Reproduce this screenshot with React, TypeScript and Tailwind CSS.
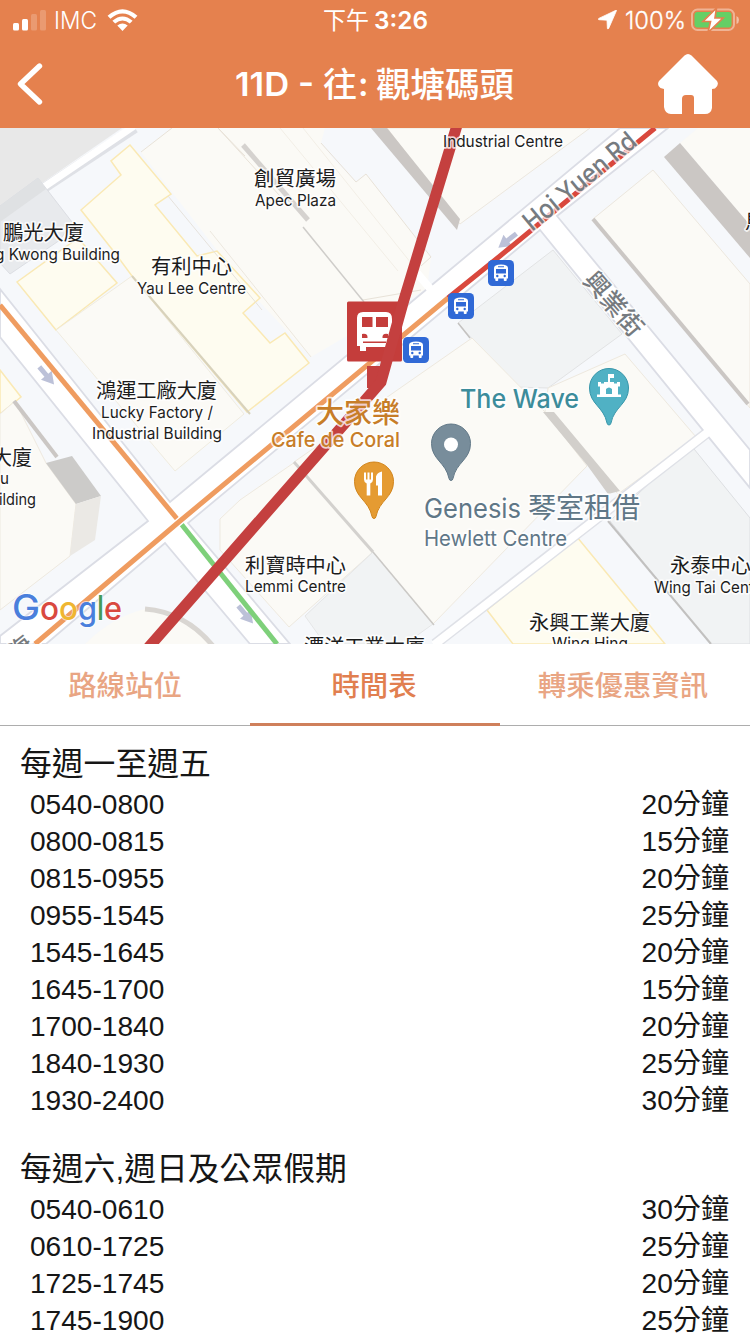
import React from "react";

type Slot = { time: string; gap: string };
type Section = { title: string; slots: Slot[] };

const sections: Section[] = [
  {
    title: "每週一至週五",
    slots: [
      { time: "0540-0800", gap: "20分鐘" },
      { time: "0800-0815", gap: "15分鐘" },
      { time: "0815-0955", gap: "20分鐘" },
      { time: "0955-1545", gap: "25分鐘" },
      { time: "1545-1645", gap: "20分鐘" },
      { time: "1645-1700", gap: "15分鐘" },
      { time: "1700-1840", gap: "20分鐘" },
      { time: "1840-1930", gap: "25分鐘" },
      { time: "1930-2400", gap: "30分鐘" },
    ],
  },
  {
    title: "每週六,週日及公眾假期",
    slots: [
      { time: "0540-0610", gap: "30分鐘" },
      { time: "0610-1725", gap: "25分鐘" },
      { time: "1725-1745", gap: "20分鐘" },
      { time: "1745-1900", gap: "25分鐘" },
    ],
  },
];

function StatusBar() {
  return (
    <div className="grid h-10 grid-cols-3 items-center text-[23px] leading-10">
      <div className="flex items-center pl-[13px]">
        <svg width="33" height="22" viewBox="0 0 33 22" fill="#fff">
          <rect x="0" y="14" width="6" height="7.5" rx="1.5" />
          <rect x="9" y="10" width="6" height="11.5" rx="1.5" />
          <rect x="18" y="5" width="6" height="16.5" rx="1.5" opacity=".2" />
          <rect x="27" y="1" width="6" height="20.5" rx="1.5" opacity=".2" />
        </svg>
        <svg width="46" height="40" className="ml-[7px] block" fill="#fff">
          <text x="1" y="29" fontSize="24" fontWeight="300" textLength="43" lengthAdjust="spacingAndGlyphs">IMC</text>
        </svg>
        <svg className="ml-[8px]" width="31" height="24" viewBox="0 0 31 24" fill="#fff">
          <path d="M.6 7.8Q15.500-5.300 30.400 7.800L27.600 10.700Q15.500.2 3.400 10.700Z" />
          <path d="M5.400 12.700Q15.500 4.100 25.600 12.700L22.800 15.600Q15.500 9.500 8.200 15.600Z" />
          <path d="M10.300 17.600Q15.500 13.500 20.700 17.600L15.500 22.900Z" />
        </svg>
      </div>
      <svg width="250" height="40" fill="#fff">
        <text x="73" y="29" fontSize="23.500" textLength="46" lengthAdjust="spacingAndGlyphs">下午</text>
        <text x="124" y="29" fontSize="24" fontWeight="600" textLength="54" lengthAdjust="spacingAndGlyphs">3:26</text>
      </svg>
      <div className="flex items-center justify-end pr-[11px]">
        <svg width="19" height="20" viewBox="0 0 19 20" fill="#fff">
          <path d="M18.500.6Q18.800 0 17.900.3L.8 8.400Q-.4 9.300.8 9.700L9 10.200 9.400 18.500Q9.800 19.600 10.700 18.400Z" stroke="#fff" strokeWidth=".8" />
        </svg>
        <svg className="ml-[6px]" width="65" height="40" fill="#fff">
          <text x="2" y="29" fontSize="24" fontWeight="300" stroke="#fff" strokeWidth=".3" textLength="61" lengthAdjust="spacingAndGlyphs">100%</text>
        </svg>
        <svg className="ml-[3px]" width="48" height="24" viewBox="0 0 48 24">
          <rect x="1" y="1.500" width="42" height="20.500" rx="5.500" fill="none" stroke="#fff" strokeOpacity=".4" strokeWidth="2" />
          <path d="M45.500 8Q48 9 48 12T45.500 16Z" fill="#fff" opacity=".5" />
          <rect x="3.500" y="4" width="37" height="15.500" rx="3" fill="#65cf65" />
          <path d="M25.500 0L12 13.500H19.500L17 24.500 32 10H24Z" fill="#fff" stroke="#e5814e" strokeWidth="1.700" />
        </svg>
      </div>
    </div>
  );
}

function TitleBar() {
  return (
    <div className="grid h-[88px] grid-cols-[88px_1fr_93px] items-start">
      <svg className="mt-[22px] ml-[16px]" width="28" height="44" viewBox="0 0 28 44">
        <path d="M23.500 4L4.500 22 23.500 40" fill="none" stroke="#fff" strokeWidth="5.400" strokeLinecap="round" strokeLinejoin="round" />
      </svg>
      <svg className="w-full" height="88" fill="#fff" fontWeight="600">
        <text x="147" y="56" fontSize="33" textLength="79" lengthAdjust="spacingAndGlyphs">11D -</text>
        <text x="235" y="57" fontSize="34" fontWeight="500" textLength="34">往</text>
        <text x="270" y="56" fontSize="33">:</text>
        <text x="288" y="57" fontSize="34.500" fontWeight="500" textLength="138">觀塘碼頭</text>
      </svg>
      <svg className="mt-[13px]" width="62" height="62" viewBox="0 0 62 62" fill="#fff">
        <path d="M27.500 2.500Q31 -.5 34.500 2.500L60 28Q62.500 32 58 35.500L55 36V55Q54 61 48 61H37V45Q37 42 34 42H29Q25 42 25 46V61H14Q8 61 7 54V36L3.500 35Q-.5 32 2 28Z" />
      </svg>
    </div>
  );
}

function BusStop({ x, y }: { x: number; y: number }) {
  return (
    <g transform={`translate(${x} ${y})`}>
      <rect width="26" height="26" rx="4.500" fill="#3069d6" />
      <path d="M6 8Q6 4.500 13 4.500T20 8V18.500H18.700V20.500Q17.200 21.600 15.800 20.500V18.500H10.200V20.500Q8.700 21.600 7.300 20.500V18.500H6Z" fill="#fff" />
      <path d="M8 9H18V13.500H8ZM10 6.300H16V7.300H10Z" fill="#3069d6" />
      <circle cx="9.300" cy="16" r="1.200" fill="#3069d6" />
      <circle cx="16.700" cy="16" r="1.200" fill="#3069d6" />
    </g>
  );
}

function Pin({ x, y, fill, edge, children }: { x: number; y: number; fill: string; edge: string; children: React.ReactNode }) {
  return (
    <g transform={`translate(${x} ${y})`}>
      <path d="M0 37Q-1.600 37-2 35C-5 19-19.500 16-19.500 0A19.500 19.500 0 0 1 19.500 0C19.500 16 5 19 2 35Q1.600 37 0 37Z" fill={fill} stroke={edge} strokeWidth="1" />
      {children}
    </g>
  );
}

type LabelProps = { x: number; y: number; w: number; size: number; children: string; fill?: string; weight?: number };

function Label({ x, y, w, size, children, fill = "#1c1c1c", weight = 400 }: LabelProps) {
  return (
    <text
      x={x}
      y={y}
      fontSize={size}
      fontWeight={weight}
      textLength={w}
      lengthAdjust="spacingAndGlyphs"
      fill={fill}
      stroke="#fff"
      strokeOpacity=".75"
      strokeWidth="3.500"
      strokeLinejoin="round"
      paintOrder="stroke"
    >
      {children}
    </text>
  );
}

function Arrow({ x, y, angle }: { x: number; y: number; angle: number }) {
  return <path transform={`translate(${x} ${y}) rotate(${angle})`} d="M-12-2.500H-1V-7L11 0-1 7V2.500H-12Z" fill="#bcc1d8" />;
}

function RouteMap() {
  return (
    <svg className="block h-[516px] w-full shrink-0" viewBox="0 128 750 516">
      <rect y="128" width="750" height="516" fill="#f6f8fb" />

      {/* Building footprints */}
      <path d="M0 128H122L0 212Z" fill="#e8e8e8" />
      <path d="M38 192L135 128" stroke="#dfe1e6" strokeWidth="10" />
      <path d="M38 191L134 126" stroke="#fff" strokeWidth="7" />
      <path d="M0 206L38 178 72 222 60 240 10 274 0 263Z" fill="#e8eaed" stroke="#dcdee3" />
      <path d="M0 206L38 178 46 189 0 222Z" fill="#dfe1e3" />
      <path d="M17 282L78 238 117 283 56 330Z" fill="#fefcf0" stroke="#fae9b4" strokeWidth="1.500" />
      <path d="M56 330L132 276 244 414 175 471Z" fill="#fbfaf6" stroke="#eee8d9" strokeWidth=".8" />
      <path d="M141 152L172 128H325L321 143 334 160 356 182 366 174 431 257 427 289 311 357 244 285Z" fill="#fbfaf6" />
      <path d="M141 152L172 128M218 128L245 156M321 143L356 182 366 174 431 257 421 266M421 290L363 300M218 128L280 196" fill="none" stroke="#e8e2d8" strokeWidth="1" />
      <path d="M280 128L398 271M303 128L415 268" stroke="#f2eee6" />
      <path d="M130 145L171 194 155 205 197 256 217 251 260 298 243 313 270 343 285 333 309 363 247 412 132 276 115 253 81 210 121 175 111 161Z" fill="#fefcf0" stroke="#fae9b4" strokeWidth="1.500" />
      <path d="M168 196L262 310" stroke="#e6e2dc" />
      <path d="M132 276L250 414" stroke="#d8d2bc" strokeWidth="2" />
      <path d="M243 145L308 220" stroke="#d5d2cf" strokeWidth="5" />
      <path d="M303 227L364 302" stroke="#cfcdca" strokeWidth="1.500" />
      <path d="M311 357L210 231" stroke="#ece7de" />
      <path d="M387 128H590L460 224Z" fill="#fbfaf6" stroke="#ece7de" />
      <path d="M371 128H387L460 219 457 230Z" fill="#cbc7c4" />
      <path d="M593 219L653 170 750 284V408Z" fill="#fbfaf6" stroke="#ece7de" />
      <path d="M593 219L748 404" stroke="#cbc7c4" strokeWidth="4" />
      <path d="M680 143L698 128H750V226Z" fill="#fbfaf6" />
      <path d="M664 157L680 143 750 225V258Z" fill="#cbc7c4" />
      <path d="M458 323L553 250 622 334 548 388 515 387Z" fill="#f1f3f4" stroke="#e2e3e4" />
      <path d="M458 323L470 338" stroke="#c4c2c0" strokeWidth="1.500" />
      <path d="M294 462L472 338 545 412 587 466 433 624Z" fill="#fbfaf6" stroke="#eee9df" />
      <path d="M545 412L548 388 625 354 696 437 618 494Z" fill="#fbfaf6" stroke="#eee9df" />
      <path d="M543 412H554L620 491 608 494 587 465Z" fill="#d2cfcb" />
      <path d="M240 500L295 462 373 552 289 627 220 550V519Z" fill="#fbfaf6" stroke="#eee9df" />
      <path d="M373 552L433 624 405 644H325L305 616Z" fill="#f1f3f4" stroke="#e5e6e7" />
      <path d="M294 462L373 552" stroke="#d3d1ce" strokeWidth="3" />
      <path d="M373 552L434 625" stroke="#cbc9c6" strokeWidth="1.500" />
      <path d="M610 521L690 444 750 518V644H710Z" fill="#f1f3f4" stroke="#dddfe2" />
      <path d="M608 521L711 644" stroke="#c2c1c0" strokeWidth="2" />
      <path d="M577 537L665 644H513L487 610Z" fill="#fefcf0" stroke="#fae9b4" strokeWidth="1.500" />
      <path d="M0 370L21 397 0 414Z" fill="#fefcf0" stroke="#fae9b4" strokeWidth="1.500" />
      <path d="M0 414L15 401 46 463 76 504 70 556 0 610Z" fill="#fbfaf6" stroke="#eee9df" />
      <path d="M14 401L57 457" stroke="#cbc7c4" strokeWidth="4" />
      <path d="M46 463L72 456 101 496 76 504Z" fill="#cccbc9" />
      <path d="M76 504L101 496 95 540 70 556Z" fill="#ebe9e5" />
      <path d="M85 644Q112 617 145 609 185 608 209 644Z" fill="#fbfaf6" />
      <path d="M145 609Q185 612 213 646" fill="none" stroke="#d9d6d2" strokeWidth="5" />

      {/* Streets */}
      <path d="M435 644L708 432" stroke="#dfe1e7" strokeWidth="11" />
      <path d="M0 289L170 502 433 284 620 128H668L557 216 750 450V488L540 230 188 523 290 644H250L165 543 46 644H0V636L148 521 0 337Z" fill="#fff" stroke="#dbdde5" strokeWidth="1.800" />
      <path d="M417 273L433 292" stroke="#fff" strokeWidth="8" />
      <path d="M434 645L712 429" stroke="#fff" strokeWidth="8" />

      <Arrow x={47} y={376} angle={50} />
      <Arrow x={246} y={615} angle={50} />
      <Arrow x={507} y={241} angle={142} />

      {/* Traffic */}
      <g fill="none" strokeWidth="5">
        <path d="M0 305L178 520" stroke="#ef9c60" />
        <path d="M178 520L277 644" stroke="#7ed07a" />
        <path d="M35 644L180 521 448 298" stroke="#fff" strokeWidth="8" />
        <path d="M35 644L180 521 448 298" stroke="#ef9c60" />
        <path d="M448 298L500 256 655 128" stroke="#d9483d" />
      </g>

      {/* Bus route */}
      <path d="M367 366H388L381 388H367Z" fill="#c4403f" />
      <rect x="347" y="301.500" width="55" height="60" rx="1.500" fill="#c43d3b" />
      <path d="M363 312H386Q392 312 392 319V345H387V347H366V351H360V346H357V318Q357 312 363 312Z" fill="#fff" />
      <path d="M362 317H372.500V327H362ZM376 317H388V327H376ZM362 334Q368 333 367.500 338H362ZM388 334Q382 333 382.500 338H388ZM363 341.500H386V343H363Z" fill="#c43d3b" />
      <path d="M458 122L403 303 381 382 148 648" fill="none" stroke="#c4403f" strokeWidth="11" />

      <BusStop x={488} y={260} />
      <BusStop x={448} y={293} />
      <BusStop x={403} y={337} />

      <Pin x={609} y={388} fill="#50b1c4" edge="#3796aa">
        <path d="M-12 9V6.500H-9V-1.500H-11V-6H-8V-4.500H-5V-6H-1V-14H5V-10H1V-6H5V-4.500H8V-6H11V-1.500H9V6.500H12V9ZM-3 6H3V1Q0-2-3 1Z" fill="#fff" fillRule="evenodd" />
      </Pin>
      <Pin x={451} y={443.500} fill="#788d9b" edge="#637988">
        <circle r="7" cy="1" fill="#fff" />
      </Pin>
      <Pin x={374} y={481.500} fill="#e59b32" edge="#d1851d">
        <path d="M-10-9H-8V-2H-6.500V-9H-4.500V-2H-3V-9H-1V-2Q-1 1-3.700 2V14H-7.300V2Q-10 1-10 -2ZM8-10V14H4V4H2V-5Q3-9 8-10Z" fill="#fff" />
      </Pin>

      {/* Place names */}
      <Label x={443} y={147} w={120} size={16.5}>Industrial Centre</Label>
      <Label x={254} y={186} w={82} size={20}>創貿廣場</Label>
      <Label x={255} y={206} w={81} size={16.5}>Apec Plaza</Label>
      <Label x={3} y={240} w={81} size={20}>鵬光大廈</Label>
      <Label x={-5} y={260} w={125} size={16.5}>g Kwong Building</Label>
      <Label x={151} y={274} w={81} size={20}>有利中心</Label>
      <Label x={137} y={294} w={109} size={16.5}>Yau Lee Centre</Label>
      <Label x={96} y={398} w={121} size={20}>鴻運工廠大廈</Label>
      <Label x={101} y={418} w={112} size={16.5}>Lucky Factory /</Label>
      <Label x={92} y={439} w={130} size={16.5}>Industrial Building</Label>
      <Label x={-8} y={465} w={40} size={20}>大廈</Label>
      <Label x={0} y={484} w={9} size={16.5}>u</Label>
      <Label x={-1} y={505} w={37} size={16.5}>ilding</Label>
      <Label x={245} y={573} w={101} size={20}>利寶時中心</Label>
      <Label x={245} y={592} w={101} size={16.5}>Lemmi Centre</Label>
      <Label x={304} y={654} w={121} size={20}>潭洋工業大廈</Label>
      <Label x={529} y={630} w={121} size={20}>永興工業大廈</Label>
      <Label x={552} y={649} w={76} size={16.5}>Wing Hing</Label>
      <Label x={670} y={573} w={81} size={20}>永泰中心</Label>
      <Label x={654} y={593} w={114} size={16.5}>Wing Tai Centre</Label>
      <Label x={745} y={229} w={20} size={20}>馬</Label>
      <Label x={316} y={423} w={84} size={28} fill="#c77d28" weight={500}>大家樂</Label>
      <Label x={271} y={447} w={129} size={20.5} fill="#c77d28" weight={500}>Cafe de Coral</Label>
      <Label x={460} y={408} w={119} size={26} fill="#3c8c9b" weight={500}>The Wave</Label>
      <Label x={424} y={518} w={97} size={27} fill="#5f7787">Genesis</Label>
      <Label x={528} y={518} w={112} size={28} fill="#5f7787">琴室租借</Label>
      <Label x={424} y={546} w={143} size={21} fill="#5f7787">Hewlett Centre</Label>
      <g transform="translate(532 232) rotate(-39.500)">
        <Label x={0} y={0} w={138} size={26} fill="#767b80" weight={500}>Hoi Yuen Rd</Label>
      </g>
      <g transform="translate(582 281) rotate(49)">
        <Label x={0} y={0} w={76} size={25} fill="#767b80" weight={500}>興業街</Label>
      </g>
      <g transform="translate(17 660) rotate(-39)">
        <Label x={0} y={0} w={22} size={22} fill="#767b80" weight={500}>海</Label>
      </g>

      <g fontWeight="500" stroke="#fff" strokeOpacity=".6" strokeWidth="2" paintOrder="stroke">
        <text x="12" y="620" fontSize="35" textLength="28" lengthAdjust="spacingAndGlyphs" fill="#4a7fdc">G</text>
        <text x="40" y="620" fontSize="32" textLength="19" lengthAdjust="spacingAndGlyphs" fill="#d9493f">o</text>
        <text x="59" y="620" fontSize="32" textLength="19" lengthAdjust="spacingAndGlyphs" fill="#efb631">o</text>
        <text x="78" y="620" fontSize="32" textLength="19" lengthAdjust="spacingAndGlyphs" fill="#4a7fdc">g</text>
        <text x="97" y="620" fontSize="34" textLength="7" lengthAdjust="spacingAndGlyphs" fill="#459b58">l</text>
        <text x="104" y="620" fontSize="32" textLength="18" lengthAdjust="spacingAndGlyphs" fill="#d9493f">e</text>
      </g>
    </svg>
  );
}

function Tabs() {
  return (
    <nav className="grid h-[82px] shrink-0 grid-cols-3 border-b border-[#adadad] text-center text-[28.4px] leading-[84px] font-medium text-[#e9a583]">
      <span>路線站位</span>
      <span className="-mb-px h-[82px] border-b-[3px] border-[#cf805b] pr-[2px] text-[#e17f50]">時間表</span>
      <span className="pr-[4px]">轉乘優惠資訊</span>
    </nav>
  );
}

export default function App() {
  return (
    <main lang="zh-Hant" className="flex h-[1334px] w-[750px] flex-col overflow-hidden bg-white font-['Inter','Noto_Sans_CJK_TC',sans-serif]">
      <header className="h-32 shrink-0 bg-[#e5814e] text-white">
        <StatusBar />
        <TitleBar />
      </header>
      <RouteMap />
      <Tabs />
      <div className="flex flex-col gap-7 pt-[16px] font-['Liberation_Sans','Noto_Sans_CJK_TC',sans-serif] text-[#161616]">
        {sections.map((section) => (
          <section key={section.title}>
            <h2 className="h-11 pl-5 text-[31.800px] leading-[44px]">{section.title}</h2>
            {section.slots.map((slot) => (
              <div key={slot.time} className="flex h-[37px] justify-between pr-[21px] pl-[30px] text-[28.1px] leading-[37px]">
                <span>{slot.time}</span>
                <span>{slot.gap}</span>
              </div>
            ))}
          </section>
        ))}
      </div>
    </main>
  );
}
